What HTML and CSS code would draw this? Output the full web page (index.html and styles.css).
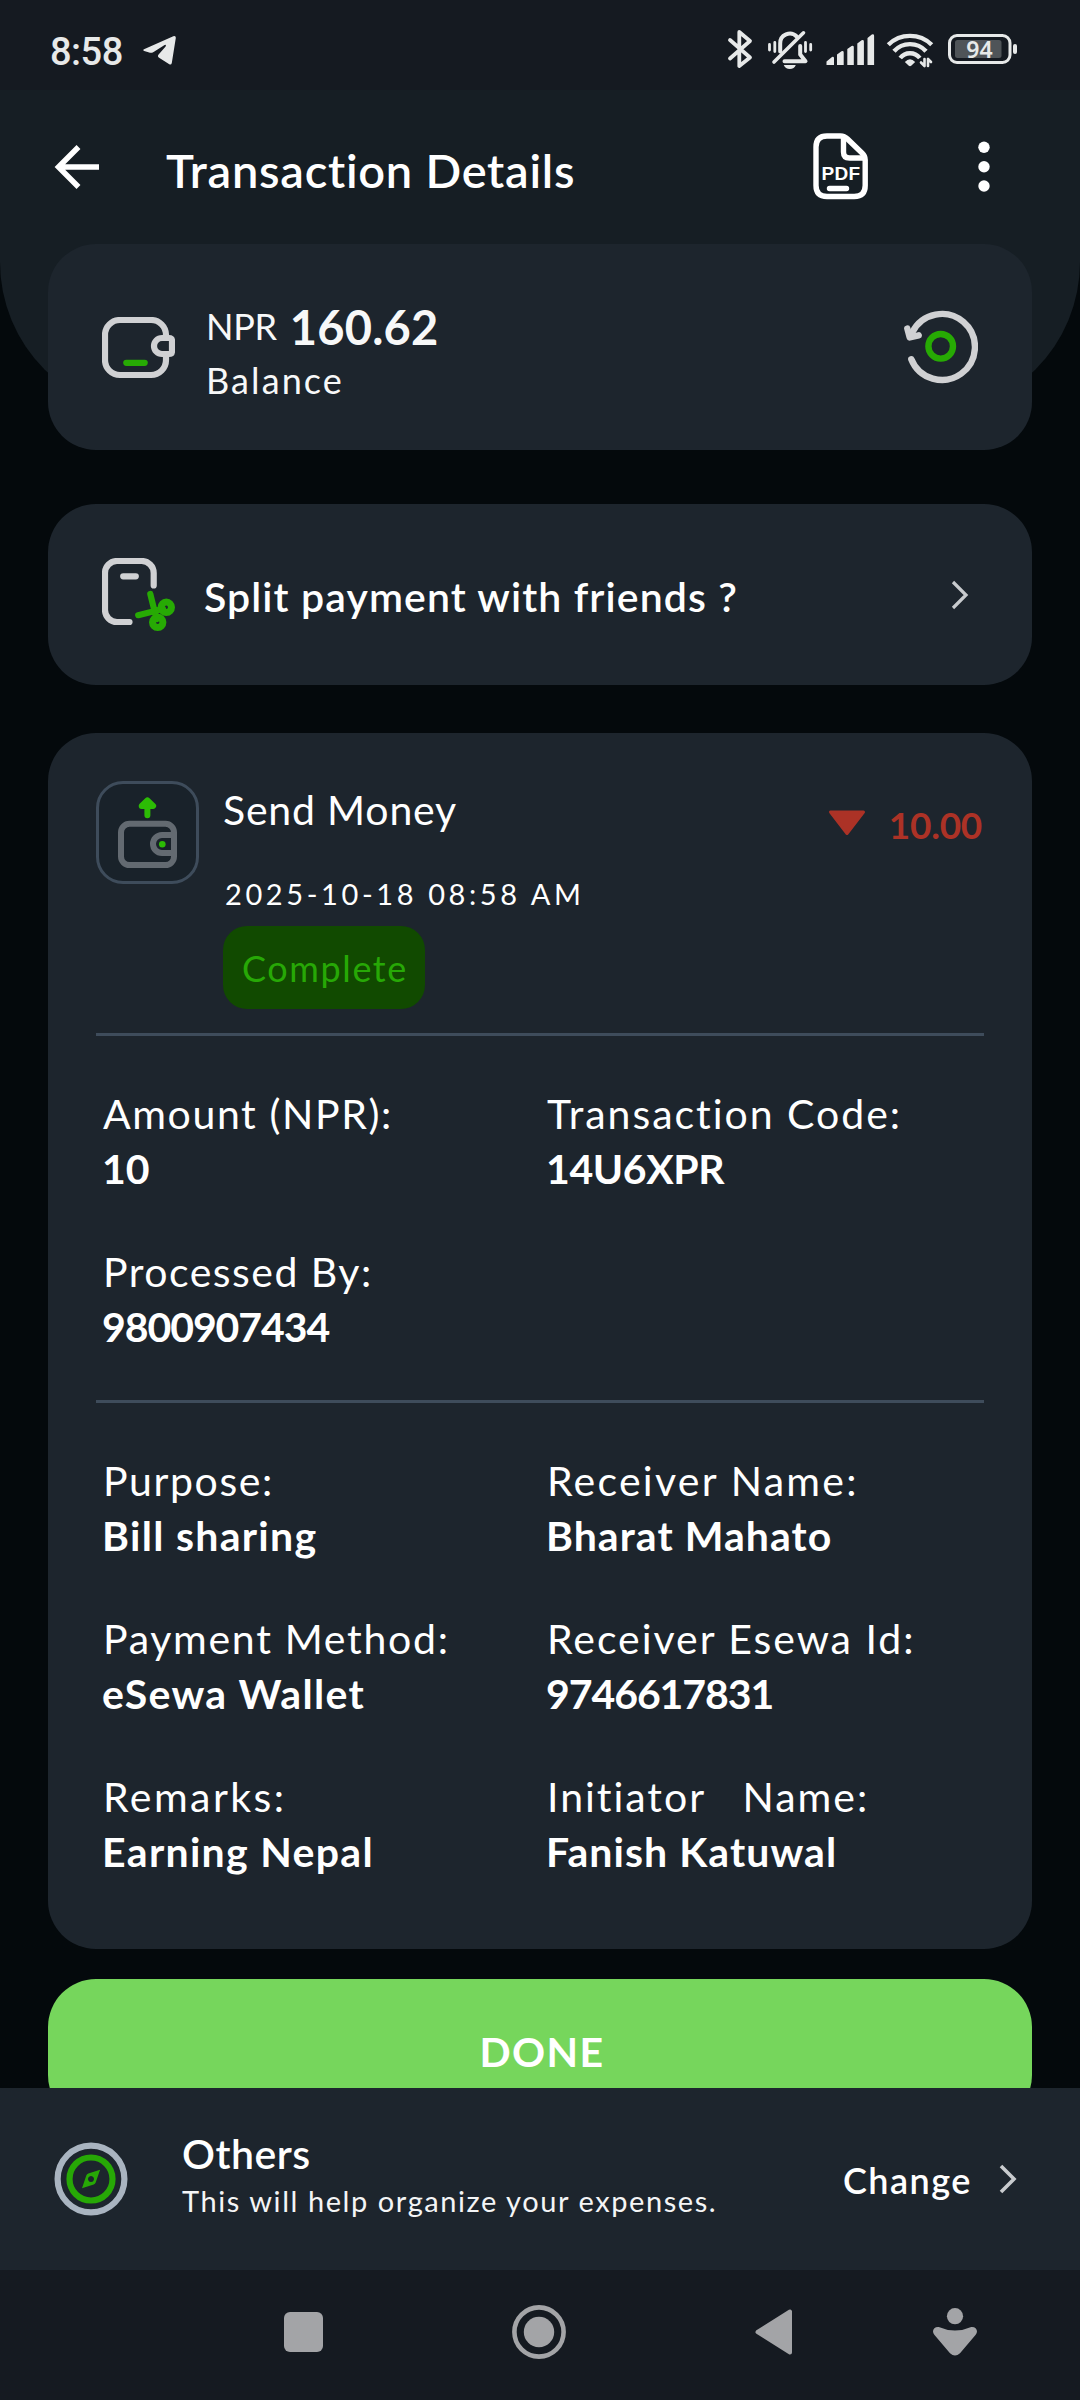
FILE: index.html
```html
<!DOCTYPE html>
<html lang="en">
<head>
<meta charset="utf-8">
<title>Transaction Details</title>
<link rel="stylesheet" href="styles.css">
</head>
<body>
<div class="status-bar">
  <span class="clock">8:58</span>
  <svg class="telegram" width="34" height="30" viewBox="142 36 34 30"><path fill="#e7e9e9" d="M144 49.2L173.3 36.2q2.7-.8 2.5 1.8L171.8 63q-.6 2.2-2.5 1.2l-10.2-6.4q-2-1.4-.5-3.2l7-8.2q1-2-1-1.5l-11 7q-2.2 1.3-4.4.7l-5-1.6q-1.9-.9-.2-1.8z"/></svg>
  <svg class="status-icons" width="292" height="42" viewBox="726 29 292 42" fill="none" stroke="#e7e9e9" stroke-linecap="round" stroke-linejoin="round">
    <path stroke-width="3.8" d="M730 40L750 57.5 739.3 66V32L750 41 730 58.5"/>
    <path stroke-width="4" d="M780.2 51.5V43.5a9.6 9.6 0 0 1 16.5-7M800.2 46v8.500l5.300 6.700H784.500"/>
    <path stroke-width="3.600" d="M803.500 32.800L774 62"/>
    <path stroke-width="2.800" d="M769.500 44.500v5.500M774.800 42.500v9M805.500 42.500v9M810.700 44.500v5.500"/>
    <path fill="#e7e9e9" stroke="none" d="M783.800 65h12q-1.500 4-6 4t-6-4z"/>
    <g fill="#e7e9e9" stroke="none">
      <path d="M826.500 61.500l5.500-4.500q2-.7 2 1.300V65h-7.500zM837 54.500l4.500-3.200q2.200-.7 2.200 1.300V65H837zM847.300 49l4.300-3q2.200-.7 2.200 1.300V65h-6.500zM857.300 43.500l4.300-3.200q2.300-.7 2.300 1.300V65h-6.600zM867.500 38l4.300-3.500q2.300-.7 2.300 1.300V65h-6.600z"/>
      <path d="M904.800 62q5.200-5.500 10.400 0l-4 3.800q-1.200.9-2.400 0z"/>
    </g>
    <path stroke-width="4.400" stroke-linecap="butt" d="M888.300 44.700a31 31 0 0 1 43.400 0M894 51.300a21.500 21.500 0 0 1 32 0M900.200 58a12.500 12.500 0 0 1 19.600 0"/>
    <path stroke-width="2.600" d="M921 62.500l3.500 3.500v-7M931 62l-3-3v7"/>
    <rect x="949.500" y="35.500" width="60.500" height="27" rx="7.500" stroke-width="3"/>
    <rect x="955" y="40" width="46.500" height="18" rx="2.500" fill="#4f5458" stroke="none"/>
    <rect x="1013" y="44" width="4" height="10" rx="2" fill="#e7e9e9" stroke="none"/>
    <text class="battery-level" x="979.500" y="58" text-anchor="middle" fill="#e7e9e9" stroke="none">94</text>
  </svg>
</div>

<header class="hero">
  <div class="app-bar">
    <svg width="46" height="46" viewBox="54 144 46 46" fill="none" stroke="#fff" stroke-width="5.500"><path d="M78.500 147L58.500 167l20 20M58 167h41"/></svg>
    <h1 class="title">Transaction Details</h1>
    <svg class="pdf" width="56" height="68" viewBox="814 133 56 68" fill="none" stroke="#fff" stroke-width="5.400" stroke-linejoin="round" stroke-linecap="round">
      <path d="M828 136h13.500q4 0 7 3L863 153q3.200 3 3.200 7v25.500q0 11-11 11H828q-11 0-11-11V147q0-11 11-11z"/>
      <path d="M844.500 138v14q0 6 6 6h14M830.500 188.500h17"/>
      <text class="pdf-label" x="842" y="180" text-anchor="middle" fill="#fff" stroke="none">PDF</text>
    </svg>
    <svg class="more" width="12" height="52" viewBox="0 0 12 52" fill="#fff"><circle cx="6" cy="6.200" r="5.700"/><circle cx="6" cy="25.700" r="5.700"/><circle cx="6" cy="45" r="5.700"/></svg>
  </div>
</header>

<main class="content">
  <section class="card balance">
    <svg class="wallet" width="73" height="62" viewBox="102 317 73 62" fill="none" stroke="#d0d1d3" stroke-width="6.200">
      <path d="M166 336v-1a15 15 0 0 0-15-15h-31a15 15 0 0 0-15 15v25a15 15 0 0 0 15 15h31a15 15 0 0 0 15-15v-4"/>
      <path d="M172 341q0-3-3-3h-7a8 8 0 0 0 0 16h7q3 0 3-3z"/>
      <path stroke="#27aa04" stroke-linecap="round" d="M126.300 362.800h18.400"/>
    </svg>
    <div class="balance-text">
      <div class="balance-row"><span class="currency">NPR</span><span class="amount">160.62</span></div>
      <div class="caption">Balance</div>
    </div>
    <svg class="refresh" width="74" height="74" viewBox="905 311 74 74" fill="none" stroke="#d0d1d3" stroke-width="6.400" stroke-linecap="round" stroke-linejoin="round">
      <path d="M912.300 360.200A33 33 0 1 0 913.500 333"/>
      <path fill="#d0d1d3" d="M908.300 329.500l2.400 9 9-2.200"/>
      <circle cx="941.700" cy="347.300" r="12.300" stroke="#27aa04"/>
    </svg>
  </section>

  <section class="card split">
    <svg width="73" height="73" viewBox="102 558 73 73" fill="none" stroke="#d0d1d3" stroke-width="6.200" stroke-linecap="round">
      <path d="M153.700 585.500V573a12 12 0 0 0-12-12H117a12 12 0 0 0-12 12v37a12 12 0 0 0 12 12h12.500M123.200 576.300h12.600"/>
      <g stroke="#27aa04"><path d="M150.300 594l4.700 19 2 6M138.200 615.200l17.800-4.400 7-2"/><circle cx="166.300" cy="607.300" r="5.200" stroke-width="7"/><circle cx="157.700" cy="622.300" r="5.200" stroke-width="7"/></g>
    </svg>
    <span class="split-label">Split payment with friends ?</span>
    <svg class="chevron" width="18" height="30" viewBox="0 0 18 30" fill="none" stroke="#c8cbce" stroke-width="3.200"><path d="M2 2l13 13L2 28"/></svg>
  </section>

  <section class="card details">
    <div class="summary">
      <svg class="type-icon" width="97" height="97" viewBox="99 784 97 97" fill="none" stroke="#636a71" stroke-width="6">
        <rect x="121" y="823.800" width="53" height="41.200" rx="8.500"/>
        <path d="M174 835h-12a9 9 0 0 0 0 18h12"/>
        <circle cx="162.300" cy="844.300" r="3.300" fill="#2cbc05" stroke="none"/>
        <path stroke="#2cbc05" stroke-linecap="round" stroke-linejoin="round" fill="#2cbc05" d="M147.400 815.300V801M141.700 806l5.700-5.600 5.700 5.600z"/>
      </svg>
      <div class="summary-text">
        <div class="type">Send Money</div>
        <div class="date">2025-10-18 08:58 AM</div>
        <div class="pill">Complete</div>
      </div>
      <div class="debit">
        <svg width="38" height="26" viewBox="0 0 38 26" fill="#ac3226" stroke="#ac3226" stroke-width="3" stroke-linejoin="round"><path d="M2.500 2h33L19 23.500z"/></svg>
        <span>10.00</span>
      </div>
    </div>
    <dl class="fields">
      <div><dt class="ls-16">Amount (NPR):</dt><dd>10</dd></div>
      <div><dt class="ls-20">Transaction Code:</dt><dd class="ls-n3">14U6XPR</dd></div>
      <div><dt class="ls-15">Processed By:</dt><dd class="ls-n10">9800907434</dd></div>
    </dl>
    <dl class="fields">
      <div><dt class="ls-16">Purpose:</dt><dd class="ls-13">Bill sharing</dd></div>
      <div><dt class="ls-22">Receiver Name:</dt><dd class="ls-10">Bharat Mahato</dd></div>
      <div><dt class="ls-17">Payment Method:</dt><dd class="ls-13">eSewa Wallet</dd></div>
      <div><dt class="ls-20">Receiver Esewa Id:</dt><dd class="ls-n10">9746617831</dd></div>
      <div><dt class="ls-24">Remarks:</dt><dd class="ls-13">Earning Nepal</dd></div>
      <div><dt class="ls-20">Initiator &nbsp; Name:</dt><dd class="ls-10">Fanish Katuwal</dd></div>
    </dl>
  </section>

  <button class="done">DONE</button>
</main>

<section class="category">
  <svg width="74" height="74" viewBox="53.500 2142.500 74 74" fill="none" stroke-width="6.200">
    <circle cx="90.500" cy="2179.500" r="33.400" stroke="#a9b4c0"/>
    <circle cx="90.500" cy="2179.500" r="21.500" stroke="#27a806"/>
    <path fill="#27a806" fill-rule="evenodd" d="M99.600 2170.300L95.200 2183q-.6 1.600-2 2.100L81.500 2188.700 85.800 2176q.5-1.500 2-2.100zM90.500 2176.500a3 3 0 1 0 .01 0z"/>
  </svg>
  <div class="category-text">
    <div class="category-name">Others</div>
    <div class="category-hint">This will help organize your expenses.</div>
  </div>
  <span class="change">Change</span>
  <svg width="18" height="30" viewBox="0 0 18 30" fill="none" stroke="#c8cbce" stroke-width="3.600"><path d="M2 2l13 13L2 28"/></svg>
</section>

<nav class="nav-bar">
  <svg width="39" height="40" viewBox="0 0 39 40"><rect width="39" height="40" rx="6" fill="#a3a4a7"/></svg>
  <svg width="54" height="54" viewBox="0 0 54 54"><circle cx="27" cy="27" r="24.600" fill="none" stroke="#a3a4a7" stroke-width="4.600"/><circle cx="27" cy="27" r="15.200" fill="#a3a4a7"/></svg>
  <svg width="38" height="46" viewBox="0 0 38 46" fill="#a3a4a7" stroke="#a3a4a7" stroke-width="4" stroke-linejoin="round"><path d="M2.500 23L35 2.500v41z"/></svg>
  <svg width="44" height="48" viewBox="0 0 44 48" fill="#a3a4a7"><circle cx="22" cy="8.200" r="8.100"/><path d="M6.500 19.200Q22 26 37.500 19.200c5-1.200 8.500 3.300 5.200 7.600L27 45.200q-5 4.600-10 0L1.300 26.800C-2 22.500 1.500 18 6.500 19.200z"/></svg>
</nav>
</body>
</html>
```
FILE: styles.css
```css
* { box-sizing: border-box; }

body {
  margin: 0;
  width: 1080px;
  height: 2400px;
  overflow: hidden;
  display: flex;
  flex-direction: column;
  background: #04090c;
  color: #fff;
  font-family: Lato, "Noto Sans", sans-serif;
}

svg { display: block; flex: none; }

/* system status bar */
.status-bar {
  flex: none;
  height: 90px;
  padding: 0 62px 0 50px;
  display: flex;
  align-items: center;
  background: #151a21;
}
.clock {
  font: 500 38px/44px Roboto, sans-serif;
  letter-spacing: -.5px;
  color: #e7e9e9;
  padding-top: 13px;
  width: 92px;
}
.telegram { margin-top: 11px; }
.status-icons { margin: 10px 0 0 auto; }
.battery-level { font: 600 23px "Noto Sans", sans-serif; }

/* header with the rounded backdrop that runs behind the first card */
.hero {
  flex: none;
  height: 324px;
  background: #161e24;
  border-radius: 0 0 152px 152px;
}
.app-bar {
  height: 154px;
  padding: 0 90px 0 54px;
  display: flex;
  align-items: center;
}
.title {
  margin: 5px 0 0 66px;
  font-size: 47px;
  line-height: 60px;
  font-weight: 600;
  letter-spacing: .75px;
}
.pdf { margin-left: auto; }
.pdf-label { font: 700 19px "Liberation Sans", sans-serif; letter-spacing: .3px; }
.more { margin-left: 109px; }

.content {
  flex: none;
  height: 1844px;
  margin-top: -170px;
  padding: 0 48px;
  overflow: hidden;
  display: flex;
  flex-direction: column;
}
.card {
  flex: none;
  background: #1d252d;
  border-radius: 48px;
}

.balance {
  height: 206px;
  padding: 0 54px;
  display: flex;
  align-items: center;
  color: #f7f8f8;
}
.wallet { margin-top: 1px; }
.balance-text { margin: 6px 0 0 31px; }
.balance-row { display: flex; align-items: flex-start; }
.currency { font-size: 36px; line-height: 54px; letter-spacing: -.3px; }
.amount { font-size: 47px; line-height: 56px; font-weight: 700; margin-left: 13px; letter-spacing: .2px; }
.caption { font-size: 36px; line-height: 44px; letter-spacing: 2.100px; margin-top: 3px; }
.refresh { margin-left: auto; }

.split {
  height: 181px;
  margin-top: 54px;
  padding: 0 63px 0 54px;
  display: flex;
  align-items: center;
}
.split-label {
  margin: 4px 0 0 29px;
  font-size: 41px;
  line-height: 50px;
  font-weight: 600;
  letter-spacing: 1.100px;
}
.chevron { margin-left: auto; }

.details {
  height: 1216px;
  margin-top: 48px;
  padding: 48px 48px 0;
}
.summary { display: flex; align-items: flex-start; padding-bottom: 24px; }
.type-icon {
  box-sizing: content-box;
  border: 3px solid #3e4c5b;
  border-radius: 27px;
  background: #19222a;
}
.summary-text { margin-left: 24px; padding-top: 1px; }
.type { font-size: 41px; line-height: 56px; letter-spacing: .8px; }
.date {
  margin-top: 34px;
  padding-left: 2px;
  font-size: 29px;
  line-height: 44px;
  letter-spacing: 3.600px;
  white-space: nowrap;
}
.pill {
  width: 202px;
  height: 83px;
  margin-top: 10px;
  border-radius: 24px;
  background: #114a00;
  color: #27a806;
  font-size: 36px;
  line-height: 85px;
  letter-spacing: 1.600px;
  padding-left: 19px;
}
.debit {
  margin: 21px 2px 0 auto;
  display: flex;
  align-items: center;
  gap: 23px;
  color: #ac3226;
  font-size: 37px;
  line-height: 46px;
  font-weight: 700;
  letter-spacing: -.3px;
}
.debit svg { margin-bottom: 5px; }

.fields {
  margin: 0;
  padding: 51px 0 46px 7px;
  border-top: 3px solid #3e4c5b;
  display: grid;
  grid-template-columns: 444px 1fr;
  row-gap: 49px;
}
.fields dt { font-size: 41px; line-height: 54.500px; }
.fields dd { margin: 0 0 0 -1px; font-size: 41px; line-height: 54.500px; font-weight: 700; }

/* letter tracking */
.ls-n10 { letter-spacing: -1.060px; }
.ls-n3 { letter-spacing: -.4px; }
.ls-10 { letter-spacing: 1.050px; }
.ls-13 { letter-spacing: 1.300px; }
.ls-15 { letter-spacing: 1.480px; }
.ls-16 { letter-spacing: 1.600px; }
.ls-17 { letter-spacing: 1.700px; }
.ls-20 { letter-spacing: 1.970px; }
.ls-22 { letter-spacing: 2.250px; }
.ls-24 { letter-spacing: 2.450px; }

.done {
  flex: none;
  height: 144px;
  margin-top: 30px;
  border: 0;
  border-radius: 48px;
  background: #76d65c;
  color: #fff;
  font: 700 41px/50px Lato, sans-serif;
  letter-spacing: 1.400px;
  padding: 2px 0 0 4px;
}

.category {
  flex: none;
  height: 182px;
  padding: 0 63px 0 54px;
  display: flex;
  align-items: center;
  background: #1d252d;
}
.category-text { margin: 0 0 11px 54px; }
.category-name { font-size: 41px; line-height: 50px; font-weight: 600; letter-spacing: .5px; }
.category-hint { font-size: 29px; line-height: 36px; letter-spacing: 1.570px; margin-top: 4px; color: #f4f5f6; }
.change {
  margin: 2px 27px 0 auto;
  font-size: 36px;
  line-height: 44px;
  font-weight: 600;
  letter-spacing: 1.500px;
}

.nav-bar {
  flex: none;
  height: 130px;
  padding: 0 103px 6px 284px;
  display: flex;
  align-items: center;
  background: #151a21;
}
.nav-bar svg + svg { margin-left: 189px; }
.nav-bar svg:last-child { margin-left: 140px; }
```
